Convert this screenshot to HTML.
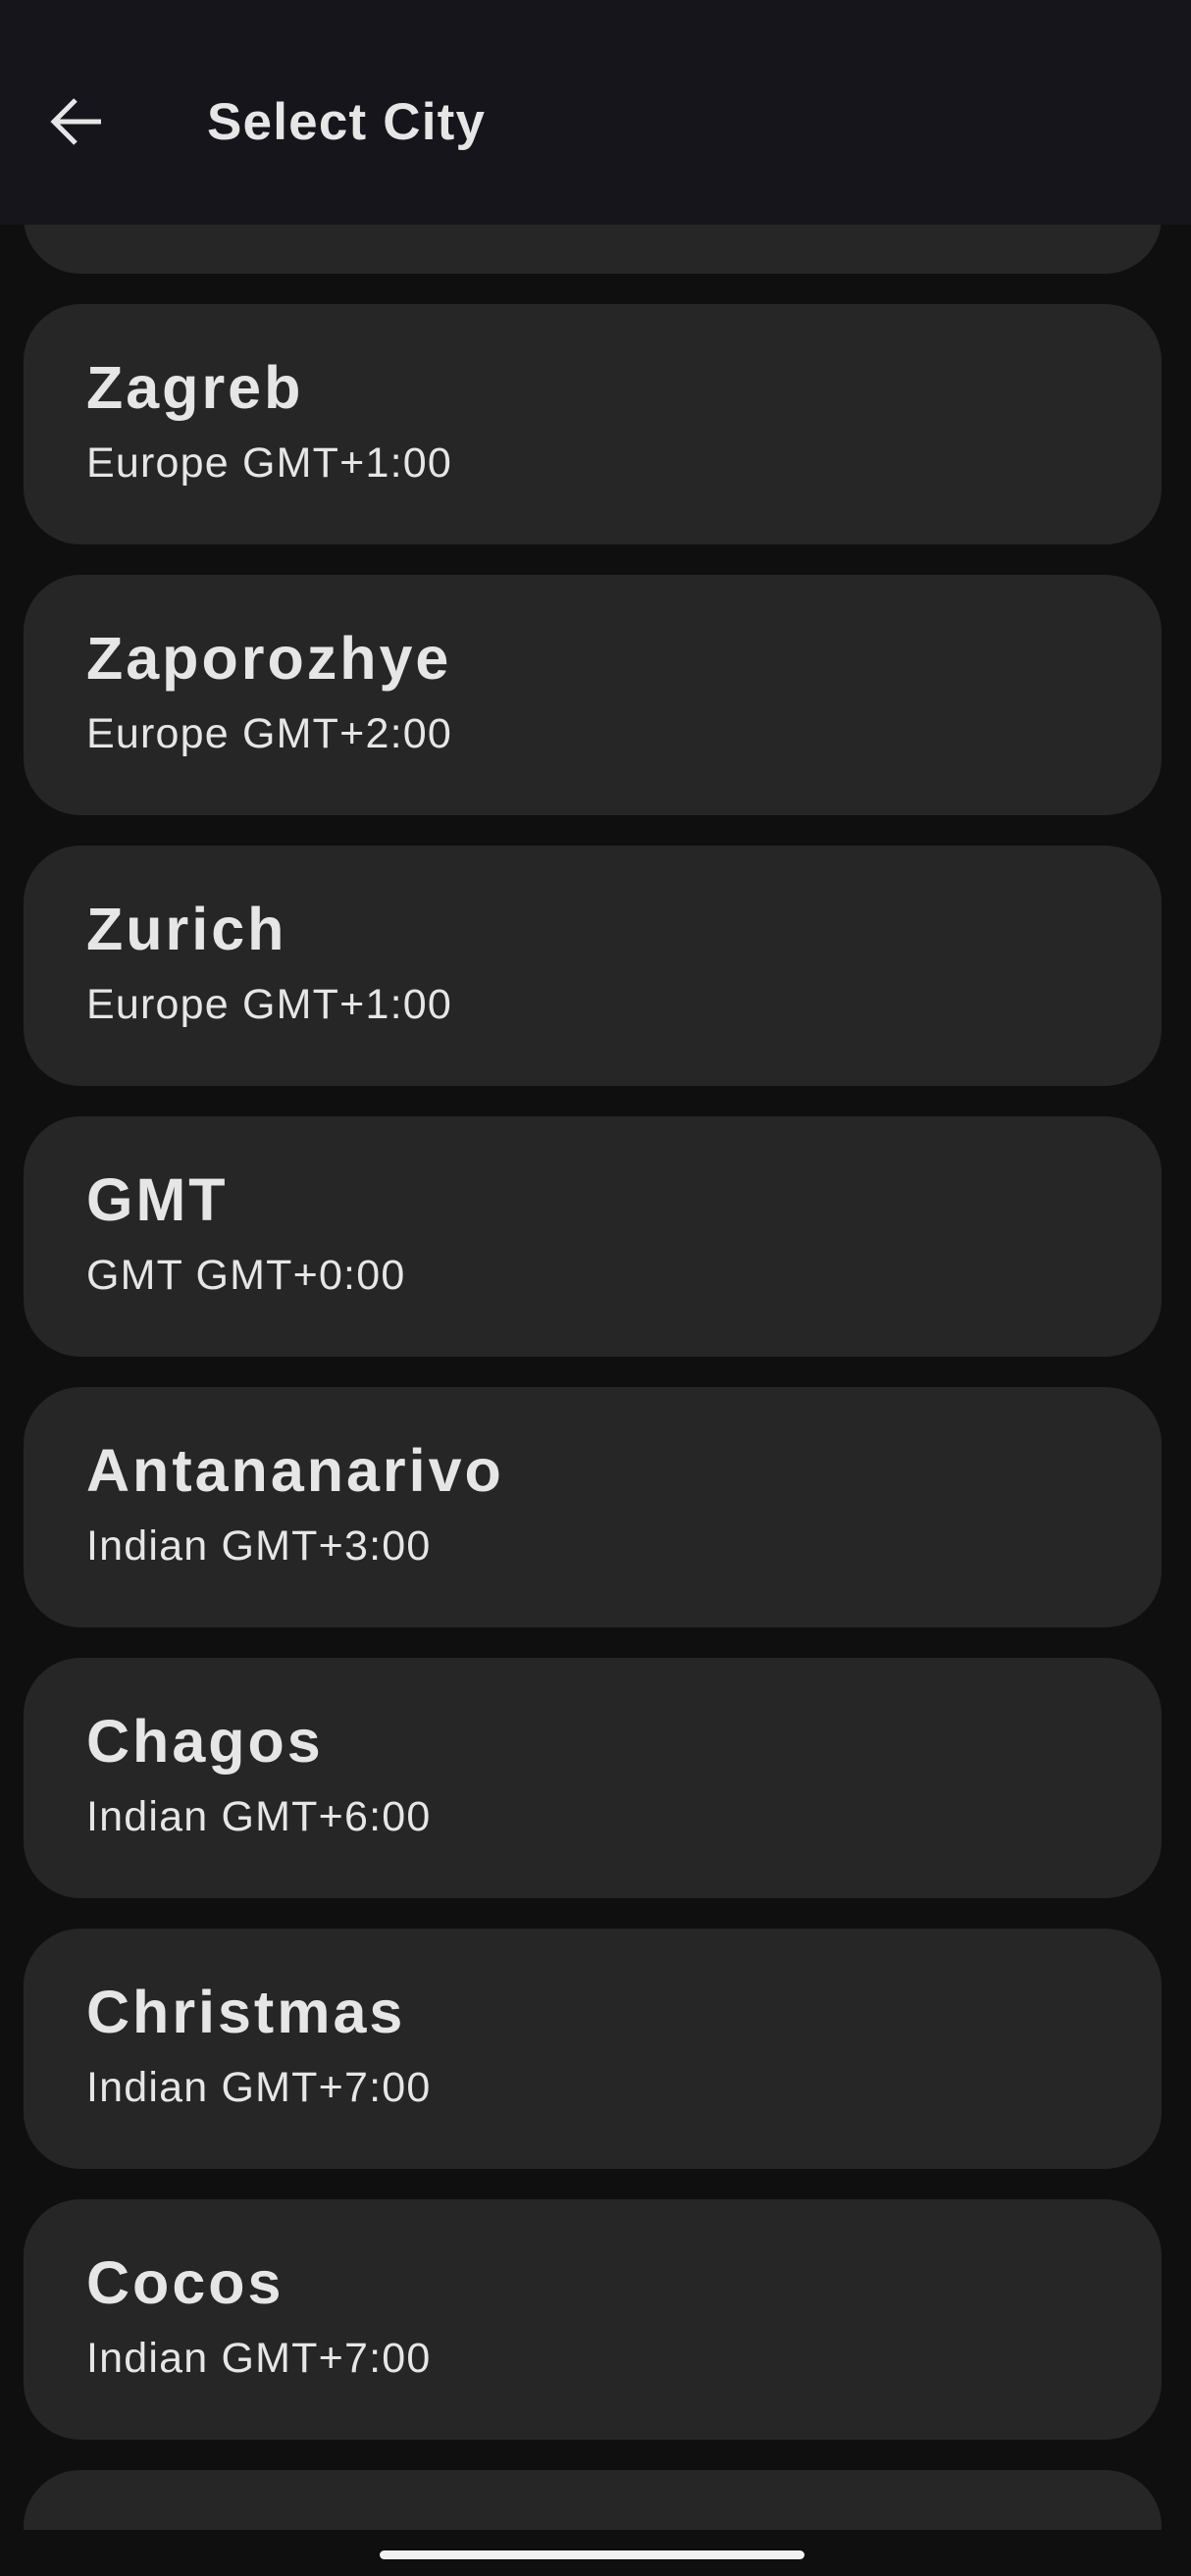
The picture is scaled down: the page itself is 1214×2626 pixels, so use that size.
<!DOCTYPE html>
<html><head><meta charset="utf-8"><style>
*{margin:0;padding:0;box-sizing:border-box}
html,body{width:1214px;height:2626px;overflow:hidden;background:#0f0f0f}
#w{width:1214px;height:2626px;position:relative;overflow:hidden;font-family:"Liberation Sans",sans-serif;color:#e6e6e6;background:#0f0f0f}
.hdr{position:absolute;left:0;top:0;width:1214px;height:229px;background:#15151b;z-index:2}
.hdr h1{position:absolute;left:211px;top:95px;font-size:53px;font-weight:bold;line-height:60px;letter-spacing:1.2px}
.hdr svg{position:absolute;left:50px;top:98px}
.card{position:absolute;left:24px;width:1160px;height:245px;background:#262626;border-radius:58px}
.t{position:absolute;left:64px;top:55px;font-size:61px;font-weight:bold;line-height:60px;letter-spacing:3px}
.s{position:absolute;left:64px;top:141px;font-size:43px;line-height:42px;letter-spacing:1.2px}
.nav{position:absolute;left:0;top:2579px;width:1214px;height:47px;background:#0f0f0f;z-index:2}
.bar{position:absolute;left:387px;top:21px;width:433px;height:9px;border-radius:5px;background:#f2f2f2}
</style></head><body><div id="w">
<div class="hdr">
<svg width="56" height="52" viewBox="0 0 56 52"><path d="M6 26H53M27 4L5 26L27 48" stroke="#e6e6e6" stroke-width="5" fill="none"/></svg>
<h1>Select City</h1>
</div>
<div class="card" style="top:34px"></div>
<div class="card" style="top:310px"><div class="t">Zagreb</div><div class="s">Europe GMT+1:00</div></div>
<div class="card" style="top:586px"><div class="t">Zaporozhye</div><div class="s">Europe GMT+2:00</div></div>
<div class="card" style="top:862px"><div class="t">Zurich</div><div class="s">Europe GMT+1:00</div></div>
<div class="card" style="top:1138px"><div class="t">GMT</div><div class="s">GMT GMT+0:00</div></div>
<div class="card" style="top:1414px"><div class="t">Antananarivo</div><div class="s">Indian GMT+3:00</div></div>
<div class="card" style="top:1690px"><div class="t">Chagos</div><div class="s">Indian GMT+6:00</div></div>
<div class="card" style="top:1966px"><div class="t">Christmas</div><div class="s">Indian GMT+7:00</div></div>
<div class="card" style="top:2242px"><div class="t">Cocos</div><div class="s">Indian GMT+7:00</div></div>
<div class="card" style="top:2518px;height:108px;border-radius:58px 58px 0 0"></div>
<div class="nav"><div class="bar"></div></div>
</div></body></html>
